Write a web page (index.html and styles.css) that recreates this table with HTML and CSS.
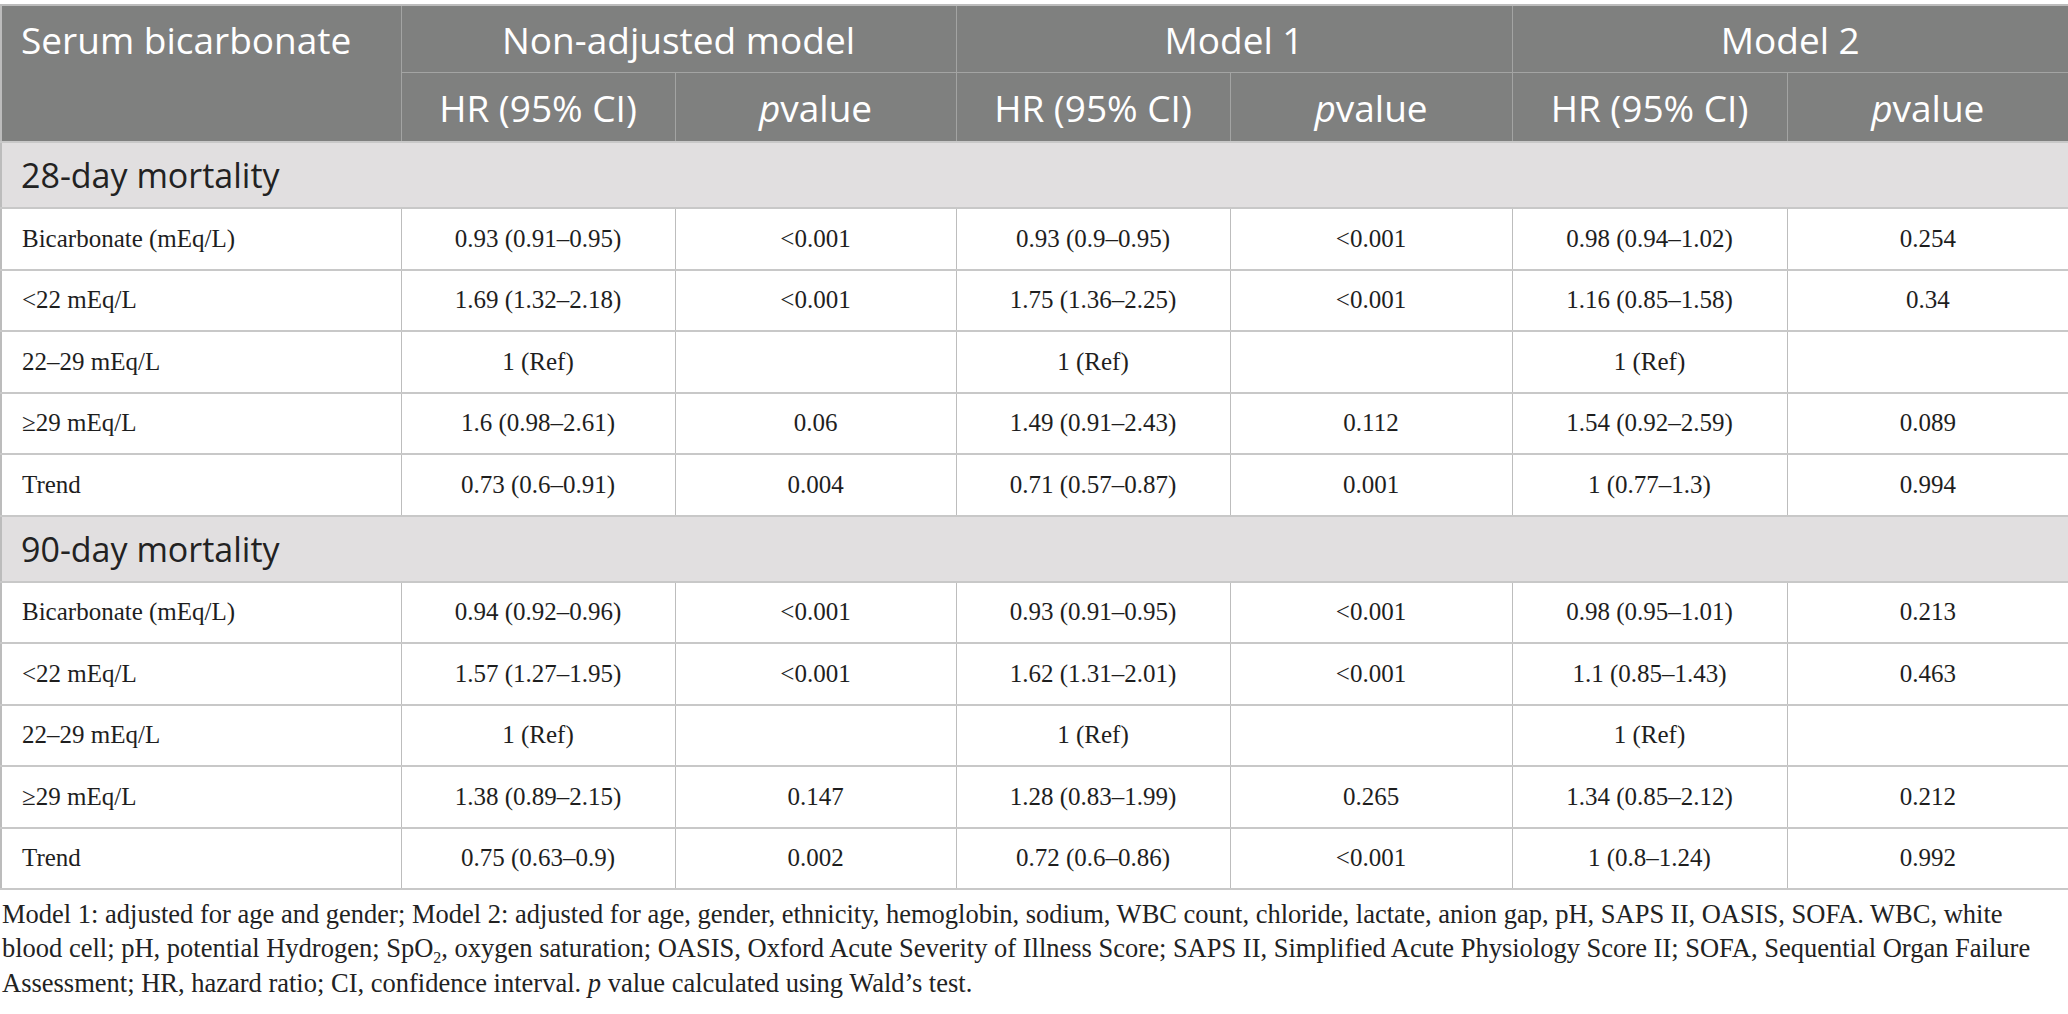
FILE: index.html
```html
<!DOCTYPE html>
<html lang="en">
<head>
<meta charset="utf-8">
<title>Serum bicarbonate table</title>
<link rel="stylesheet" href="styles.css">
</head>
<body>
<div class="page">
<table class="data-table">
  <colgroup>
    <col class="c-label">
    <col class="c-hr">
    <col class="c-p">
    <col class="c-hr2">
    <col class="c-p2">
    <col class="c-hr3">
    <col class="c-p3">
  </colgroup>
  <thead>
    <tr class="head-1">
      <th class="label-head" rowspan="2">Serum bicarbonate</th>
      <th colspan="2">Non-adjusted model</th>
      <th colspan="2">Model 1</th>
      <th colspan="2">Model 2</th>
    </tr>
    <tr class="head-2">
      <th>HR (95% CI)</th>
      <th><i>p</i>value</th>
      <th>HR (95% CI)</th>
      <th><i>p</i>value</th>
      <th>HR (95% CI)</th>
      <th><i>p</i>value</th>
    </tr>
  </thead>
  <tbody>
    <tr class="section"><td colspan="7">28-day mortality</td></tr>
    <tr><td>Bicarbonate (mEq/L)</td><td>0.93 (0.91–0.95)</td><td>&lt;0.001</td><td>0.93 (0.9–0.95)</td><td>&lt;0.001</td><td>0.98 (0.94–1.02)</td><td>0.254</td></tr>
    <tr><td>&lt;22 mEq/L</td><td>1.69 (1.32–2.18)</td><td>&lt;0.001</td><td>1.75 (1.36–2.25)</td><td>&lt;0.001</td><td>1.16 (0.85–1.58)</td><td>0.34</td></tr>
    <tr><td>22–29 mEq/L</td><td>1 (Ref)</td><td></td><td>1 (Ref)</td><td></td><td>1 (Ref)</td><td></td></tr>
    <tr><td>≥29 mEq/L</td><td>1.6 (0.98–2.61)</td><td>0.06</td><td>1.49 (0.91–2.43)</td><td>0.112</td><td>1.54 (0.92–2.59)</td><td>0.089</td></tr>
    <tr><td>Trend</td><td>0.73 (0.6–0.91)</td><td>0.004</td><td>0.71 (0.57–0.87)</td><td>0.001</td><td>1 (0.77–1.3)</td><td>0.994</td></tr>
    <tr class="section"><td colspan="7">90-day mortality</td></tr>
    <tr><td>Bicarbonate (mEq/L)</td><td>0.94 (0.92–0.96)</td><td>&lt;0.001</td><td>0.93 (0.91–0.95)</td><td>&lt;0.001</td><td>0.98 (0.95–1.01)</td><td>0.213</td></tr>
    <tr><td>&lt;22 mEq/L</td><td>1.57 (1.27–1.95)</td><td>&lt;0.001</td><td>1.62 (1.31–2.01)</td><td>&lt;0.001</td><td>1.1 (0.85–1.43)</td><td>0.463</td></tr>
    <tr><td>22–29 mEq/L</td><td>1 (Ref)</td><td></td><td>1 (Ref)</td><td></td><td>1 (Ref)</td><td></td></tr>
    <tr><td>≥29 mEq/L</td><td>1.38 (0.89–2.15)</td><td>0.147</td><td>1.28 (0.83–1.99)</td><td>0.265</td><td>1.34 (0.85–2.12)</td><td>0.212</td></tr>
    <tr><td>Trend</td><td>0.75 (0.63–0.9)</td><td>0.002</td><td>0.72 (0.6–0.86)</td><td>&lt;0.001</td><td>1 (0.8–1.24)</td><td>0.992</td></tr>
  </tbody>
</table>
<p class="footnote">Model 1: adjusted for age and gender; Model 2: adjusted for age, gender, ethnicity, hemoglobin, sodium, WBC count, chloride, lactate, anion gap, pH, SAPS II, OASIS, SOFA. WBC, white blood cell; pH, potential Hydrogen; SpO<sub>2</sub>, oxygen saturation; OASIS, Oxford Acute Severity of Illness Score; SAPS II, Simplified Acute Physiology Score II; SOFA, Sequential Organ Failure Assessment; HR, hazard ratio; CI, confidence interval. <i>p</i> value calculated using Wald’s test.</p>
</div>
</body>
</html>
```

FILE: styles.css
```css
html, body {
  margin: 0;
  padding: 0;
  background: #ffffff;
}

.page {
  padding-top: 4px;
  width: 2068px;
}

.data-table {
  width: 2068px;
  border-collapse: collapse;
  table-layout: fixed;
  border: 2px solid #bcbcbc;
}

.c-label { width: 400px; }
.c-hr { width: 274px; }
.c-p { width: 281px; }
.c-hr2 { width: 274px; }
.c-p2 { width: 282px; }
.c-hr3 { width: 275px; }
.c-p3 { width: 282px; }

.data-table th {
  background: #7f807f;
  color: #ffffff;
  font-family: "Open Sans", "Noto Sans", sans-serif;
  font-weight: 400;
  font-size: 37px;
  text-align: center;
  border: 1px solid #a3a4a3;
  padding: 0 10px;
  vertical-align: middle;
}

.data-table th i {
  font-style: italic;
}

.head-1 th { height: 66px; }
.head-2 th { height: 68px; }

.data-table th.label-head {
  text-align: left;
  vertical-align: top;
  padding: 8px 19px 0;
}

.data-table td {
  font-family: "Liberation Serif", "Times New Roman", serif;
  font-size: 25px;
  color: #1e1e1e;
  text-align: center;
  height: 59.5px;
  border-top: 2px solid #c8c8c8;
  border-bottom: 2px solid #c8c8c8;
  border-left: 1px solid #bdbdbd;
  border-right: 1px solid #bdbdbd;
  padding: 0 10px;
}

.data-table td:first-child {
  text-align: left;
  padding-left: 20px;
}

.data-table tr.section td {
  background: #e1dfe0;
  font-family: "Open Sans", "Noto Sans", sans-serif;
  font-size: 34px;
  color: #222222;
  text-align: left;
  height: 64px;
  padding-left: 19px;
}

.footnote {
  width: 2052px;
  margin: 7px 0 0 2px;
  font-family: "Liberation Serif", "Times New Roman", serif;
  font-size: 26.5px;
  line-height: 34.4px;
  color: #222222;
}

.footnote sub {
  font-size: 16px;
  line-height: 0;
}
```
